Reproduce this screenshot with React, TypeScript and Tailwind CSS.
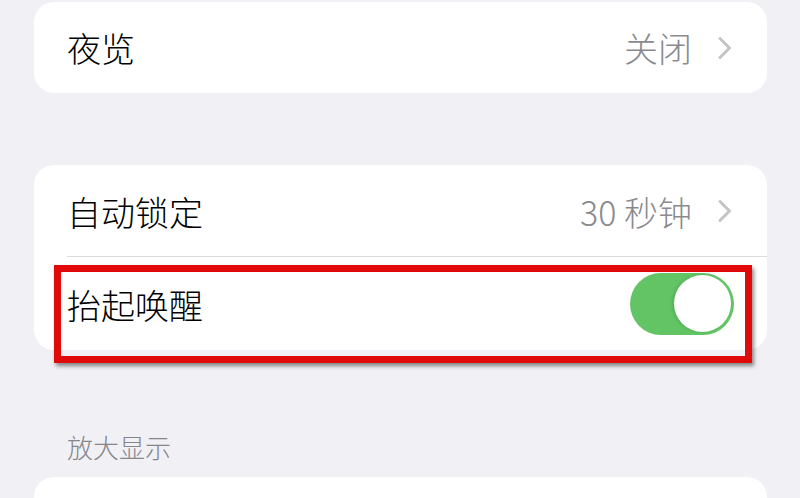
import React from "react";

const font = { fontFamily: '"Noto Sans CJK SC", "Noto Sans", sans-serif' };

function Chevron() {
  return (
    <svg width="16" height="24" viewBox="0 0 16 24" className="ml-[25px]" fill="none">
      <path d="M3 2.5 L12.5 12 L3 21.5" stroke="#c4c4c7" strokeWidth="3" strokeLinecap="round" strokeLinejoin="round" />
    </svg>
  );
}

function Toggle() {
  return (
    <div className="w-[104px] h-[62px] rounded-full bg-[#62c465] flex items-center justify-end pr-[3px]">
      <div className="w-[57px] h-[57px] rounded-full bg-white shadow-[-2px_0_3px_rgba(0,0,0,0.12)]" />
    </div>
  );
}

export default function App() {
  return (
    <div
      className="relative w-[800px] h-[498px] overflow-hidden bg-[#f0f0f5] pl-[34px] pr-[33px] pt-[2px] font-light"
      style={font}
    >
      {/* Card 1 */}
      <div className="bg-white rounded-[20px] h-[91px] flex items-center pl-[33px] pr-[34px]">
        <span className="text-[34px] leading-none text-black flex-1">夜览</span>
        <span className="text-[34px] leading-none text-[#8a8a8e]">关闭</span>
        <Chevron />
      </div>

      {/* Card 2 */}
      <div className="mt-[72px] bg-white rounded-[20px] h-[185px] flex flex-col pl-[33px]">
        <div className="h-[92px] flex items-center pr-[34px] border-b border-[#dcdce0]">
          <span className="text-[34px] leading-none text-black flex-1 pt-[2px]">自动锁定</span>
          <span className="text-[34px] leading-none text-[#8a8a8e] pt-[2px]">30 秒钟</span>
          <Chevron />
        </div>
        <div className="flex-1 flex items-center pr-[33px]">
          <span className="text-[34px] leading-none text-black flex-1 pt-[3px]">抬起唤醒</span>
          <Toggle />
        </div>
      </div>

      {/* Section header */}
      <div className="mt-[84px] pl-[33px] text-[26px] leading-none text-[#86868b]">放大显示</div>

      {/* Card 3 */}
      <div className="mt-[17px] bg-white rounded-t-[20px] h-[60px]" />

      {/* Red highlight box overlay */}
      <div className="absolute left-[54px] top-[265px] w-[698px] h-[98px] border-[7px] border-[#e10a0a] shadow-[2px_3px_4px_rgba(0,0,0,0.45)]" />
    </div>
  );
}
